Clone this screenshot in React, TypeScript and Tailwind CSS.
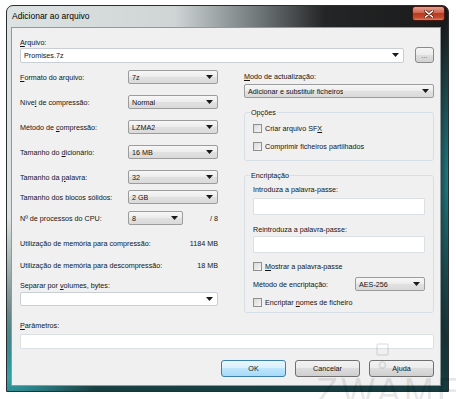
import type { ReactNode } from "react";

function Arrow() {
  return (
    <svg width="7" height="4" viewBox="0 0 7 4" className="shrink-0">
      <path d="M0 0H7L3.5 4Z" fill="#1a1a1a" />
    </svg>
  );
}

function Combo({ value, className = "", edit = false }: { value?: string; className?: string; edit?: boolean }) {
  return (
    <div
      className={`h-[14px] flex items-center justify-between pl-[3px] pr-[4px] rounded-[2px] border ${
        edit
          ? "bg-white border-[#c9ced4]"
          : "bg-[linear-gradient(#f7f7f7,#ececec_50%,#e1e1e1_50%,#dadada)] border-[#9c9c9c]"
      } ${className}`}
    >
      <span className="truncate">{value}</span>
      <Arrow />
    </div>
  );
}

function Check({ children }: { children: ReactNode }) {
  return (
    <div className="flex items-center gap-[3px]">
      <span className="size-[9px] shrink-0 border border-[#8e8f8f] bg-[linear-gradient(135deg,#d9d9d9,#f7f7f7)]" />
      <span>{children}</span>
    </div>
  );
}

function Row({ h, label, children }: { h: string; label: ReactNode; children?: ReactNode }) {
  return (
    <div className={`${h} flex items-center`}>
      <span className="w-[108px] shrink-0">{label}</span>
      {children}
    </div>
  );
}

function Btn({ children, main = false }: { children: ReactNode; main?: boolean }) {
  return (
    <div
      className={`w-[65px] h-[17px] flex items-center justify-center rounded-[3px] border ${
        main
          ? "border-[#3c7fb1] bg-[linear-gradient(#eaf6fd,#d9f0fc_50%,#bee6fd_50%,#a7d9f5)]"
          : "border-[#707070] bg-[linear-gradient(#f2f2f2,#ebebeb_50%,#dddddd_50%,#cfcfcf)]"
      }`}
    >
      {children}
    </div>
  );
}

export default function App() {
  return (
    <div className="w-[456px] h-[399px] bg-white relative overflow-hidden font-['Liberation_Sans',Arial,sans-serif] text-[#141414]">
      {/* janela */}
      <div className="ml-[6px] mt-[5px] w-[443px] h-[387px] rounded-t-[7px] border border-[#2a2e2f] flex flex-col pl-[4px] pr-[7px] pb-[5px] bg-[radial-gradient(90px_70px_at_0%_96%,#35a3ab,transparent),radial-gradient(14px_160px_at_100%_45%,#1e7d85,transparent),linear-gradient(180deg,transparent_55%,#163c3f_100%),linear-gradient(90deg,#dde2e2_0%,#cfd5d5_38%,#6b7274_58%,#232526_72%,#1a1a1a_100%)]">
        <div className="h-[21px] flex items-start justify-between">
          <span className="pl-[1px] pt-[5px] text-[8.5px] leading-[10px] text-black">Adicionar ao arquivo</span>
          <div className="-mr-[4px] w-[33px] h-[15px] rounded-[3px] border border-[#4a1a12] flex items-center justify-center bg-[linear-gradient(#e6a091,#d0644c_45%,#bd3a20_50%,#c44a2c_80%,#d98063)]">
            <svg width="10" height="8" viewBox="0 0 10 8">
              <path d="M1.5 1L8.5 7M8.5 1L1.5 7" stroke="#5a2418" strokeWidth="3" strokeLinecap="round" />
              <path d="M1.5 1L8.5 7M8.5 1L1.5 7" stroke="#ffffff" strokeWidth="1.6" strokeLinecap="round" />
            </svg>
          </div>
        </div>

        {/* area cliente */}
        <div className="flex-1 bg-[#f0f0f0] border border-[#8d9b9e] flex flex-col pl-[8px] pr-[6px] pt-[10px] text-[7.2px] leading-[9px]">
          <div>
            <u>A</u>rquivo:
          </div>
          <div className="h-[16px] flex items-center">
            <Combo edit value="Promises.7z" className="w-[384px] h-[15px]" />
            <div className="ml-[11px] w-[19px] h-[16px] rounded-[3px] border border-[#8a8a8a] bg-[linear-gradient(#f4f4f4,#ececec_50%,#dedede_50%,#d2d2d2)] flex items-center justify-center text-[#555]">
              ...
            </div>
          </div>

          <div className="mt-[2px] flex">
            {/* coluna esquerda */}
            <div className="w-[198px] flex flex-col">
              <Row h="h-[24px]" label={<><u>F</u>ormato do arquivo:</>}>
                <Combo value="7z" className="w-[90px]" />
              </Row>
              <Row h="h-[26px]" label={<>Níve<u>l</u> de compressão:</>}>
                <Combo value="Normal" className="w-[90px]" />
              </Row>
              <Row h="h-[24px]" label={<>Método de <u>c</u>ompressão:</>}>
                <Combo value="LZMA2" className="w-[90px]" />
              </Row>
              <Row h="h-[26px]" label={<>Tamanho do <u>d</u>icionário:</>}>
                <Combo value="16 MB" className="w-[90px]" />
              </Row>
              <Row h="h-[24px]" label={<>Tamanho da <u>p</u>alavra:</>}>
                <Combo value="32" className="w-[90px]" />
              </Row>
              <Row h="h-[16px]" label="Tamanho dos blocos sólidos:">
                <Combo value="2 GB" className="w-[90px]" />
              </Row>
              <Row h="h-[26px]" label="Nº de processos do CPU:">
                <Combo value="8" className="w-[55px]" />
                <span className="flex-1 text-right">/ 8</span>
              </Row>
              <div className="h-[24px] flex items-center justify-between">
                <span>Utilização de memória para compressão:</span>
                <span>1184 MB</span>
              </div>
              <div className="h-[20px] flex items-center justify-between">
                <span>Utilização de memória para descompressão:</span>
                <span>18 MB</span>
              </div>
              <div className="mt-[6px]">
                Separar por <u>v</u>olumes, bytes:
              </div>
              <Combo edit className="mt-[2px]" />
            </div>

            {/* coluna direita */}
            <div className="ml-[26px] w-[190px] flex flex-col">
              <div className="mt-[7px]">
                <u>M</u>odo de actualização:
              </div>
              <Combo value="Adicionar e substituir ficheiros" className="mt-[3px]" />

              <fieldset className="mt-[10px] border border-[#d5dfe5] rounded-[3px] px-[8px] pt-[2px] pb-[5px]">
                <legend className="-ml-[3px] px-[1px]">Opções</legend>
                <div className="h-[18px] flex items-center">
                  <Check>
                    Criar arquivo SF<u>X</u>
                  </Check>
                </div>
                <div className="h-[18px] flex items-center">
                  <Check>Comprimir ficheiros partilhados</Check>
                </div>
              </fieldset>

              <fieldset className="mt-[10px] border border-[#d5dfe5] rounded-[3px] px-[8px] pb-[3px] flex flex-col">
                <legend className="-ml-[3px] px-[1px]">Encriptação</legend>
                <div className="mt-[5px]">Introduza a palavra-passe:</div>
                <div className="mt-[4px] h-[17px] bg-white border border-[#dbe0e5] rounded-[1px]" />
                <div className="mt-[10px]">Reintroduza a palavra-passe:</div>
                <div className="mt-[2px] h-[17px] bg-white border border-[#dbe0e5] rounded-[1px]" />
                <div className="mt-[6px] h-[14px] flex items-center">
                  <Check>
                    <u>M</u>ostrar a palavra-passe
                  </Check>
                </div>
                <div className="mt-[4px] h-[14px] flex items-center justify-between">
                  <span>Método de encriptação:</span>
                  <Combo value="AES-256" className="w-[70px]" />
                </div>
                <div className="mt-[4px] h-[14px] flex items-center">
                  <Check>
                    Encriptar <u>n</u>omes de ficheiro
                  </Check>
                </div>
              </fieldset>
            </div>
          </div>

          <div className="mt-[8px]">
            <u>P</u>arâmetros:
          </div>
          <div className="mt-[4px] h-[15px] bg-white border border-[#dbe0e5] rounded-[1px]" />

          <div className="mt-[11px] flex justify-end gap-[9px]">
            <Btn main>OK</Btn>
            <Btn>Cancelar</Btn>
            <Btn>Ajuda</Btn>
          </div>
        </div>
      </div>

      {/* marca de água */}
      <div className="absolute left-[316px] top-[340px] pointer-events-none flex flex-col items-start">
        <svg width="80" height="34" viewBox="0 0 80 34">
          <rect x="61" y="4" width="11" height="11" rx="1" fill="none" stroke="#000" strokeOpacity="0.1" strokeWidth="1.5" />
          <circle cx="66.5" cy="25" r="3" fill="none" stroke="#000" strokeOpacity="0.1" strokeWidth="1.5" />
        </svg>
        <span className="text-[36px] leading-none tracking-[3px] text-black/10 font-light">ZWAME</span>
      </div>
    </div>
  );
}
